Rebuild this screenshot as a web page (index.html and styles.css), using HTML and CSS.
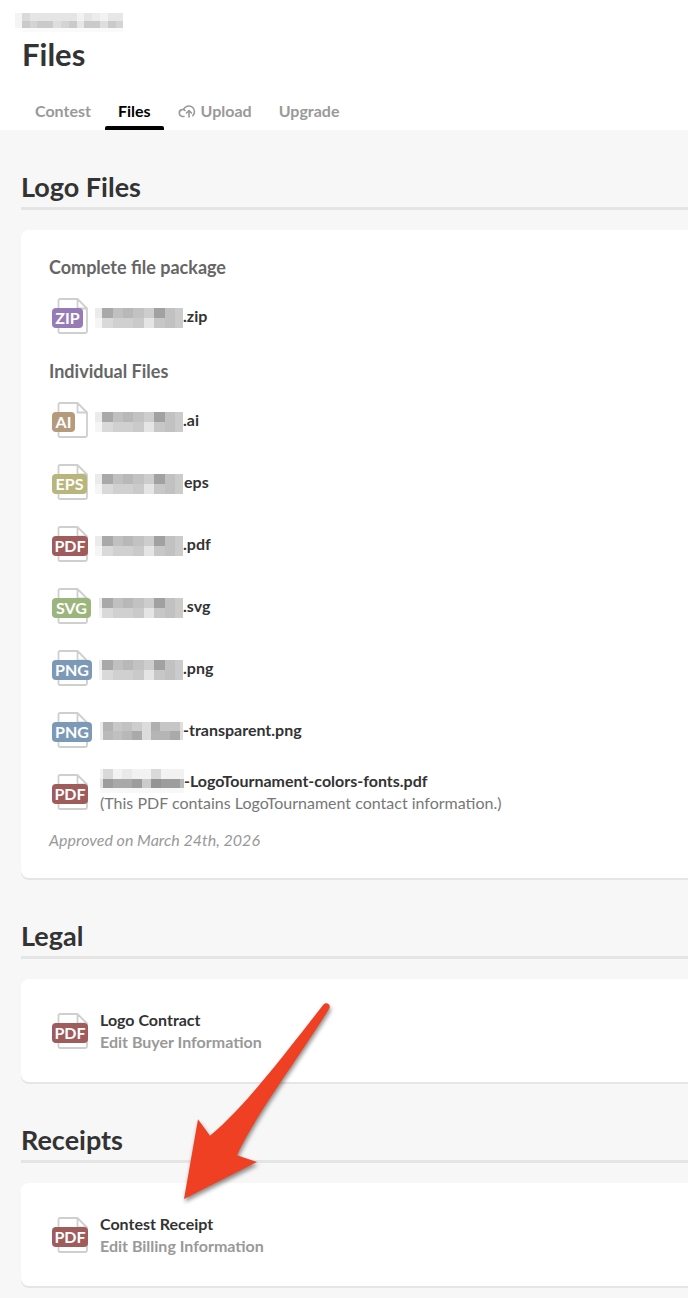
FILE: index.html
```html
<!DOCTYPE html>
<html lang="en">
<head>
    <meta charset="UTF-8">
    <meta name="viewport" content="width=device-width, initial-scale=1.0">
    <title>Files</title>
    <link rel="stylesheet" href="styles.css">
</head>
<body>
    <svg class="defs" aria-hidden="true">
        <symbol id="page" viewBox="0 0 36 36">
            <path d="M8 1h17.500l9.500 9.500V33.500a1.500 1.500 0 0 1-1.500 1.500H8a1.500 1.500 0 0 1-1.500-1.500v-31A1.500 1.500 0 0 1 8 1zM25.500 1v9.500H35" fill="#fff" stroke="#cfcfcf" stroke-width="1.8" stroke-linejoin="round"/>
        </symbol>
        <symbol id="mask" viewBox="0 -4 90 24">
            <path fill="#ebebea" d="M2 0h7v10H2z"/><path fill="#f5f5f5" d="M2 10h7v10H2z"/>
            <path fill="#a9a9a9" d="M9 0h11v10H9z"/><path fill="#d9d9d9" d="M9 10h11v10H9z"/>
            <path fill="#c0c0c0" d="M20 0h10v10H20z"/><path fill="#d0d0d0" d="M20 10h20v10H20z"/>
            <path fill="#b8b8b8" d="M30 0h10v10H30z"/>
            <path fill="#c2c2c2" d="M40 0h11v10H40z"/><path fill="#cacaca" d="M40 10h11v10H40z"/>
            <path fill="#cdcdcd" d="M51 0h10v10H51z"/><path fill="#e5e5e5" d="M51 10h10v10H51z"/>
            <path fill="#a1a1a1" d="M61 0h11v10H61z"/><path fill="#c7c7c7" d="M61 10h11v10H61z"/>
            <path fill="#c1c1c1" d="M72 0h10v20H72z"/>
            <path fill="#cbcbcb" d="M82 0h8v20h-8z"/>
        </symbol>
        <symbol id="mask-soft" viewBox="0 -2 90 20">
            <path fill="#ececec" d="M7 0h3v18H7z"/>
            <path fill="#b4b4b4" d="M10 0h10v9H10z"/><path fill="#bababa" d="M10 9h10v9H10z"/>
            <path fill="#c8c8c8" d="M20 0h9v9h-9z"/><path fill="#c0c0c0" d="M20 9h9v9h-9z"/>
            <path fill="#c2c2c2" d="M29 0h10v9H29z"/><path fill="#b8b8b8" d="M29 9h10v9H29z"/>
            <path fill="#cdcdcd" d="M39 0h10v9H39z"/><path fill="#aaa" d="M39 9h10v9H39z"/>
            <path fill="#dcdcdc" d="M49 0h9v18h-9z"/>
            <path fill="#b0b0b0" d="M58 0h9v9h-9z"/><path fill="#b5b5b5" d="M58 9h19v9H58z"/>
            <path fill="#c6c6c6" d="M67 0h20v9H67z"/><path fill="#aaa" d="M77 9h10v9H77z"/>
            <path fill="#dedede" d="M87 0h3v18h-3z"/>
        </symbol>
        <symbol id="mask-tall" viewBox="0 0 84 24">
            <path fill="#f2f2f2" d="M0 0h84v10H0z"/><path fill="#f8f8f8" d="M0 19h84v5H0z"/>
            <path fill="#d9d9d9" d="M3 0h10v10H3zM51 0h10v10H51z"/><path fill="#e9e9e9" d="M22 0h10v10H22z"/>
            <path fill="#e2e2e2" d="M0 10h3v9H0z"/>
            <path fill="#9d9d9d" d="M3 10h10v9H3zM32 10h10v9H32zM61 10h19v9H61z"/>
            <path fill="#a9a9a9" d="M13 10h19v9H13z"/><path fill="#cbcbcb" d="M42 10h9v9h-9z"/>
            <path fill="#949494" d="M51 10h10v9H51z"/><path fill="#b8b8b8" d="M80 10h4v9h-4z"/>
        </symbol>
    </svg>

    <header class="top">
        <svg class="site" viewBox="0 0 110 20" aria-hidden="true">
            <path fill="#f4f4f4" d="M0 1h7v15H0z"/><path fill="#fafafa" d="M7 16h101v4H7z"/>
            <path fill="#dadada" d="M7 1h8v8H7z"/><path fill="#e5e5e5" d="M15 1h47v8H15zM69 1h8v8h-8z"/>
            <path fill="#f2f2f2" d="M62 1h7v8h-7zM85 1h8v8h-8z"/><path fill="#ececec" d="M77 1h8v8h-8z"/>
            <path fill="#e7e7e7" d="M93 1h15v8H93z"/>
            <path fill="#cacaca" d="M7 9h8v7H7zM22 9h16v7H22zM54 9h8v7h-8zM69 9h16v7H69zM93 9h8v7h-8z"/>
            <path fill="#d4d4d4" d="M15 9h7v7h-7zM46 9h8v7h-8zM101 9h7v7h-7z"/>
            <path fill="#dedede" d="M38 9h8v7h-8zM85 9h8v7h-8z"/><path fill="#e6e6e6" d="M62 9h7v7h-7z"/>
        </svg>
        <h1>Files</h1>
        <nav class="tabs">
            <a href="#contest">Contest</a>
            <a href="#files" class="active">Files</a>
            <a href="#upload">
                <svg class="cloud" viewBox="0 0 19 16" fill="none" stroke="#999" stroke-width="1.6" stroke-linecap="round" stroke-linejoin="round" aria-hidden="true">
                    <path d="M6 13.500H4.500a3.500 3.500 0 0 1-.5-6.900 3 3 0 0 1 3 .9M5.500 6.500a5.700 5.700 0 1 1 9.300 6.200M11 14V8M8.500 10L11 7.500l2.500 2.500"/>
                </svg>
                Upload
            </a>
            <a href="#upgrade">Upgrade</a>
        </nav>
    </header>

    <main>
        <section>
            <h2>Logo Files</h2>
            <div class="card files">
                <h3>Complete file package</h3>
                <div class="row">
                    <span class="icon"><svg><use href="#page"/></svg><b class="zip">ZIP</b></span>
                    <a href="#zip"><svg class="mask"><use href="#mask"/></svg>.zip</a>
                </div>
                <h3 class="next">Individual Files</h3>
                <div class="row">
                    <span class="icon"><svg><use href="#page"/></svg><b class="ai">AI</b></span>
                    <a href="#ai"><svg class="mask"><use href="#mask"/></svg>.ai</a>
                </div>
                <div class="row">
                    <span class="icon"><svg><use href="#page"/></svg><b class="eps">EPS</b></span>
                    <a href="#eps"><svg class="mask"><use href="#mask"/></svg>&#8202;eps</a>
                </div>
                <div class="row">
                    <span class="icon"><svg><use href="#page"/></svg><b class="pdf">PDF</b></span>
                    <a href="#pdf"><svg class="mask"><use href="#mask"/></svg>.pdf</a>
                </div>
                <div class="row">
                    <span class="icon"><svg><use href="#page"/></svg><b class="svg">SVG</b></span>
                    <a href="#svg"><svg class="mask short"><use href="#mask"/></svg>.svg</a>
                </div>
                <div class="row">
                    <span class="icon"><svg><use href="#page"/></svg><b class="png">PNG</b></span>
                    <a href="#png"><svg class="mask short"><use href="#mask"/></svg>.png</a>
                </div>
                <div class="row">
                    <span class="icon"><svg><use href="#page"/></svg><b class="png">PNG</b></span>
                    <a href="#transparent"><svg class="mask soft"><use href="#mask-soft"/></svg>-transparent.png</a>
                </div>
                <div class="row detail">
                    <span class="icon"><svg><use href="#page"/></svg><b class="pdf">PDF</b></span>
                    <div>
                        <a href="#colors"><svg class="mask tall"><use href="#mask-tall"/></svg>-LogoTournament-colors-fonts.pdf</a>
                        <p>(This PDF contains LogoTournament contact information.)</p>
                    </div>
                </div>
                <p class="approved">Approved on March 24th, 2026</p>
            </div>
        </section>

        <section>
            <h2>Legal</h2>
            <div class="card">
                <div class="row detail">
                    <span class="icon"><svg><use href="#page"/></svg><b class="pdf">PDF</b></span>
                    <div>
                        <a href="#contract">Logo Contract</a>
                        <a href="#buyer" class="edit">Edit Buyer Information</a>
                    </div>
                </div>
            </div>
        </section>

        <section>
            <h2>Receipts</h2>
            <div class="card">
                <div class="row detail">
                    <span class="icon"><svg><use href="#page"/></svg><b class="pdf">PDF</b></span>
                    <div>
                        <a href="#receipt">Contest Receipt</a>
                        <a href="#billing" class="edit">Edit Billing Information</a>
                    </div>
                </div>
            </div>
            <svg class="arrow" viewBox="0 0 150 200" aria-hidden="true">
                <path d="M0 197L14 117.300L26 133.700C62 104 102 50 139.500 2.600C142 -.6 147.500 2 145.200 6.500C112 60 72 112 53 153.200L73 160z" fill="#ef4023"/>
            </svg>
        </section>
    </main>
</body>
</html>
```

FILE: styles.css
```css
*{
    margin: 0;
    padding: 0;
    box-sizing: border-box;
}
body{
    background: #f7f7f7;
    color: #333;
    font-family: Lato, "Liberation Sans", sans-serif;
    font-size: 16px;
    line-height: 22px;
}
a{
    color: inherit;
    text-decoration: none;
}
.defs{
    display: none;
}
.top{
    background: white;
    padding: 12px 0 0 22px;
}
.site{
    display: block;
    width: 110px;
    height: 20px;
    margin-left: -7px;
}
h1{
    font-size: 31px;
    line-height: 36px;
    margin-top: 4px;
}
.tabs{
    display: flex;
    gap: 1px;
    margin-top: 21px;
}
.tabs a{
    display: flex;
    align-items: center;
    gap: 4px;
    height: 37px;
    padding: 4px 13px;
    color: #999;
    font-weight: bold;
}
.tabs .active{
    color: black;
    position: relative;
}
.tabs .active::after{
    content: "";
    position: absolute;
    left: 0;
    right: 0;
    bottom: 0;
    height: 4px;
    border-radius: 2px 2px 0 0;
    background: black;
}
.tabs a{
    padding-bottom: 6px;
}
.cloud{
    width: 19px;
    height: 16px;
}
main{
    padding: 41px 0 11px 21px;
}
section{
    position: relative;
}
section + section{
    margin-top: 42px;
}
h2{
    font-size: 27px;
    line-height: 32px;
    padding-bottom: 4px;
    border-bottom: 3px solid #e5e5e5;
    margin-bottom: 20px;
}
.card{
    background: white;
    border-radius: 8px 0 0 8px;
    box-shadow: 0 2px 0 #e6e6e6;
    padding: 21px 28px 20px;
}
.files{
    padding: 28px;
}
h3{
    font-size: 18px;
    line-height: 18px;
    color: #666;
    margin-bottom: 9px;
}
.next{
    margin-top: 15px;
}
.row{
    display: flex;
    align-items: center;
    gap: 1px;
    height: 62px;
    padding-left: 3px;
}
.row a{
    display: flex;
    align-items: center;
    font-weight: bold;
    height: 22px;
}
.detail{
    gap: 8px;
}
.row p{
    color: #777;
}
.row .edit{
    color: #999;
}
.mask{
    width: 90px;
    height: 24px;
}
.short{
    clip-path: inset(0 0 0 6px);
}
.soft{
    height: 20px;
}
.tall{
    width: 84px;
}
.icon{
    position: relative;
    flex: none;
    width: 40px;
    height: 36px;
}
.icon svg{
    display: block;
    width: 36px;
    height: 36px;
}
.icon b{
    position: absolute;
    left: 0;
    top: 10px;
    height: 20px;
    border-radius: 4px;
    color: white;
    font-size: 16px;
    line-height: 20px;
    text-align: center;
}
.zip{
    width: 31px;
    background: #967bb6;
}
.ai{
    width: 23px;
    background: #b59a7c;
}
.eps{
    width: 35px;
    background: #b8b67c;
}
.pdf{
    width: 36px;
    background: #a05b5b;
}
.svg{
    width: 39px;
    background: #9cb57c;
}
.png{
    width: 40px;
    background: #7c9ab8;
}
.approved{
    margin-top: 7px;
    line-height: 20px;
    font-style: italic;
    color: #999;
}
.arrow{
    position: absolute;
    left: 163px;
    top: -122px;
    width: 150px;
    height: 200px;
    overflow: visible;
    filter: drop-shadow(1px 3px 2px rgba(0, 0, 0, .45));
}
```
